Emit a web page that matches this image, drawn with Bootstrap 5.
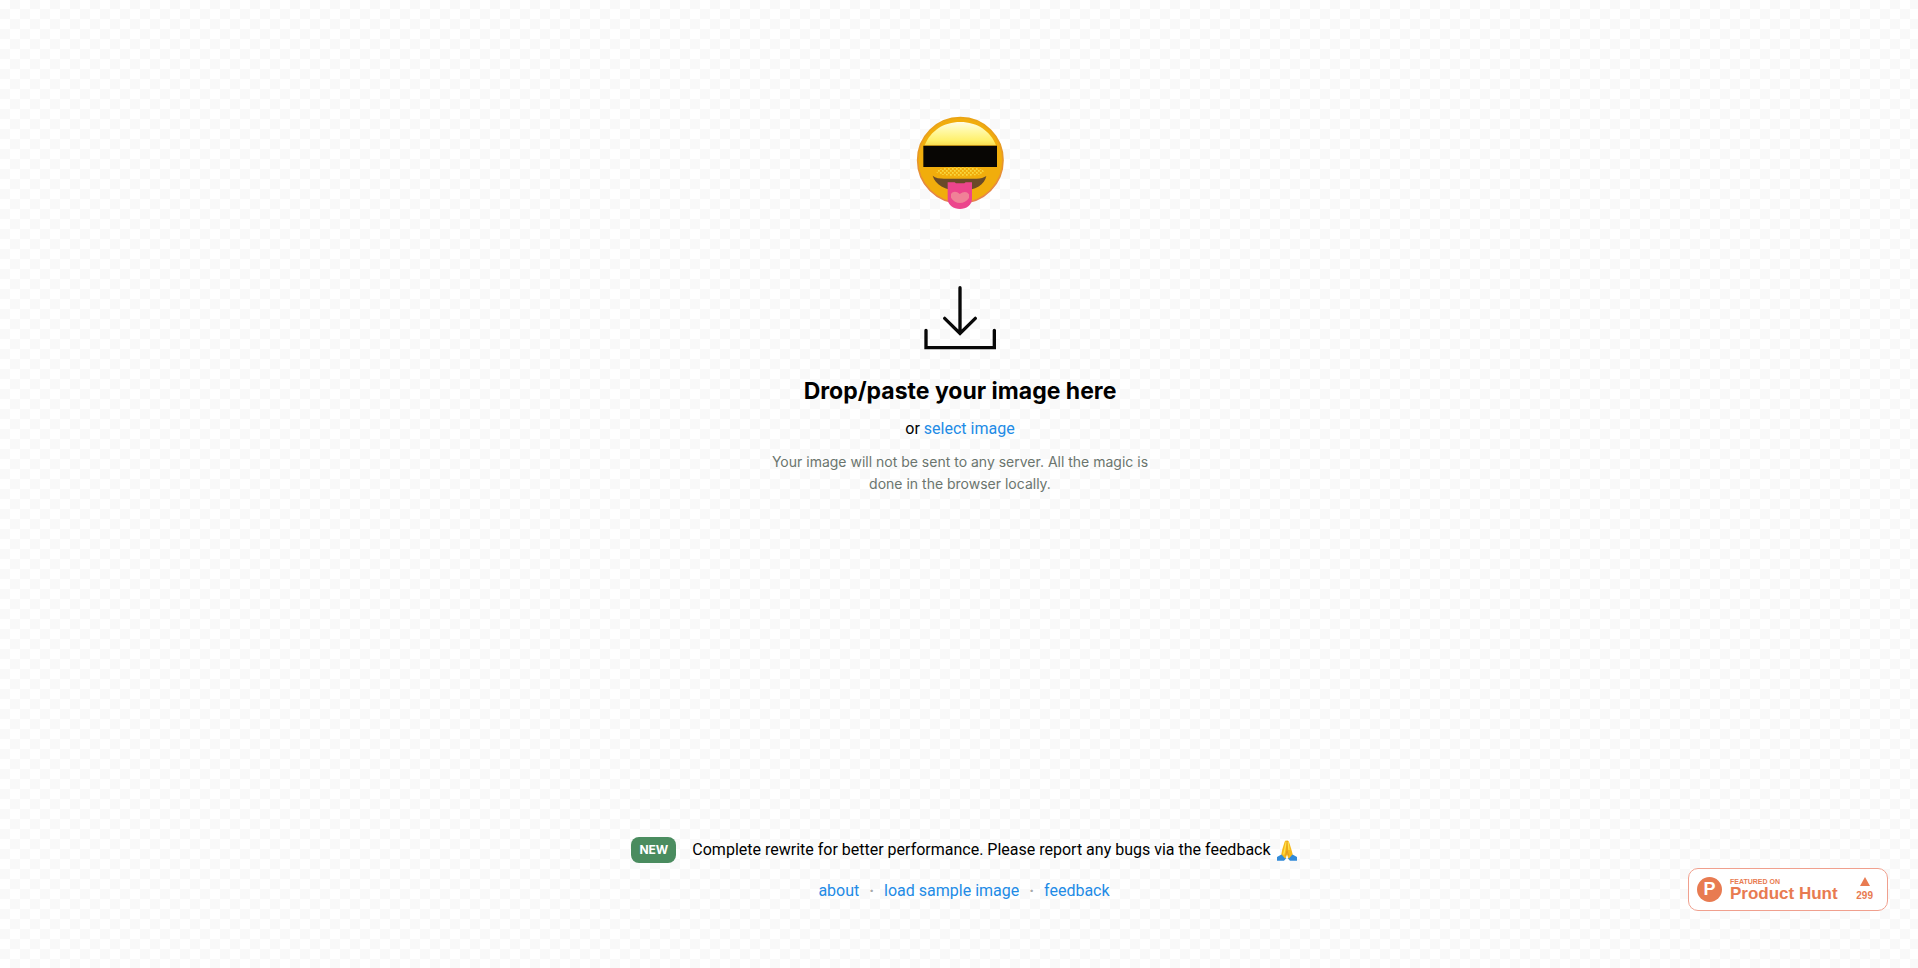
<!DOCTYPE html>
<html lang="en">
<head>
<meta charset="utf-8">
<meta name="viewport" content="width=device-width, initial-scale=1">
<title>Drop or paste your image</title>
<link href="https://cdn.jsdelivr.net/npm/bootstrap@5.3.0/dist/css/bootstrap.min.css" rel="stylesheet">
<style>
  body {
    font-family: Roboto, "Liberation Sans", sans-serif;
    font-size: 16px;
    line-height: 24px;
    color: #000;
    background: #fff repeating-conic-gradient(#fff 0 25%, #f9f9f9 0 50%) 10px -1px / 20px 20px;
  }
  a { color: #228be6; text-decoration: none; }
  a:hover { text-decoration: underline; }
  .page-main { padding: 116px 0 0 2px; }
  .face { width: 90px; height: 94px; margin-bottom: 76px; }
  .drop-icon { width: 72px; height: 64px; margin-bottom: 23px; }
  .drop-title, .privacy, .tag-new { font-family: Inter, "Liberation Sans", sans-serif; }
  .drop-title { font-size: 23px; line-height: 36px; font-weight: 700; margin-bottom: 8px; }
  .privacy { font-size: 14px; line-height: 22px; max-width: 400px; color: #6b756e; margin-top: 10px; }
  .page-footer { padding: 0 0 65px 10px; }
  .tag-new { font-size: 12px; line-height: 14px; font-weight: 700; padding: 6px 8px; border-radius: 8px; background: #4a8c5f; color: #fff; }
  .hands { width: 20px; height: 21px; }
  .notice-text { gap: 6px; }
  .site-links { gap: 10px; }
  .dot { color: #aaa; font-weight: 700; }
  .hunt { right: 30px; bottom: 57px; width: 200px; height: 43px; padding: 0 14px 0 8px; border: 1px solid #f0a08e; border-radius: 10px; background: #fff; color: #e87b51; font-family: "Liberation Sans", Arial, sans-serif; font-weight: 700; }
  .hunt:hover { text-decoration: none; }
  .hunt-logo { width: 25px; height: 25px; border-radius: 50%; background: #e87b51; color: #fff; font-size: 18px; line-height: 25px; }
  .hunt-over { font-size: 7px; line-height: 9px; }
  .hunt-name { font-size: 17px; line-height: 16px; }
  .hunt-count { font-size: 10px; line-height: 12px; }
</style>
</head>
<body class="d-flex flex-column min-vh-100">
<main class="page-main flex-grow-1 d-flex flex-column align-items-center text-center">
  <svg class="face" viewBox="45 48 270 282" role="img" aria-label="Face with censored eyes">
    <defs>
      <linearGradient id="shine" x1="0" y1="0" x2="0" y2="1">
        <stop offset="0" stop-color="#fffce6"/><stop offset=".35" stop-color="#fff9a8"/>
        <stop offset=".8" stop-color="#fff06a"/><stop offset="1" stop-color="#f9dc50"/>
      </linearGradient>
      <linearGradient id="rim" x1="0" y1="0" x2="0" y2="1">
        <stop offset="0" stop-color="#eaa414"/><stop offset=".5" stop-color="#e7972a"/><stop offset="1" stop-color="#e57f50"/>
      </linearGradient>
      <pattern id="grain" width="12" height="12" patternUnits="userSpaceOnUse">
        <path d="M0 0h5v5H0zM6 6h5v5H6z" fill="#f8d840"/>
      </pattern>
    </defs>
    <circle cx="181" cy="181" r="128" fill="#f1ad0c" stroke="url(#rim)" stroke-width="5"/>
    <path d="M74 136C91 93 130 66 181 66s90 27 107 70z" fill="url(#shine)"/>
    <ellipse cx="181" cy="215" rx="72" ry="14" fill="url(#grain)"/>
    <path d="M70 137h221v64H70z" fill="#080604"/>
    <path d="M98 227c8 7 22 9 34 9h98c12 0 22-3 29-8-5 25-30 44-78 44s-75-19-83-45z" fill="#694a28"/>
    <path d="M143 247h21l4 3h25l4-3h19v50c0 18-17 30-36 30s-37-12-37-30z" fill="#ec458c"/>
    <path d="M153 282c6-8 16-9 26 0 12-9 22-8 28 1v11c-7 10-17 15-27 15s-21-6-27-16z" fill="#f08197"/>
  </svg>

  <svg class="drop-icon" viewBox="72 48 216 192" fill="none" stroke="#080808" stroke-width="10" stroke-linecap="round" stroke-linejoin="miter" aria-hidden="true">
    <path d="M180 53v136M134 145l46 45 46-45M78 181v52h205v-52"/>
  </svg>
  <h1 class="drop-title">Drop/paste your image here</h1>
  <div>or <a href="#select">select image</a></div>
  <p class="privacy">Your image will not be sent to any server. All the magic is done in the browser locally.</p>
</main>

<footer class="page-footer text-center">
  <div class="d-flex justify-content-center align-items-center gap-3">
    <span class="tag-new">NEW</span>
    <span class="notice-text d-flex align-items-center">Complete rewrite for better performance. Please report any bugs via the feedback
      <svg class="hands" viewBox="0 0 60 63" role="img" aria-label="Folded hands">
        <path d="M0 62V51l16-9 12 13-7 7zM60 62V51l-16-9-12 13 7 7z" fill="#338bd8"/>
        <path d="M29 2c-4-2-6 2-7 6L16 28l-3 15 12 13 5-12 5 12 12-13-4-15-6-20c-1-4-4-8-8-6z" fill="#f6b91c"/>
        <path d="M28 5l-5 25-3 14M33 6l3 24" fill="none" stroke="#ffe34b" stroke-width="4"/>
        <path d="M30 3v29l-4 15M30 32l5 15" fill="none" stroke="#d68b22" stroke-width="2"/>
      </svg>
    </span>
  </div>
  <nav class="site-links d-flex justify-content-center mt-3" aria-label="Site">
    <a href="#about">about</a><span class="dot">·</span>
    <a href="#sample">load sample image</a><span class="dot">·</span>
    <a href="#feedback">feedback</a>
  </nav>
</footer>

<a class="hunt position-fixed d-flex align-items-center gap-2" href="#product-hunt">
  <span class="hunt-logo text-center">P</span>
  <span class="flex-grow-1 text-nowrap"><span class="hunt-over d-block">FEATURED ON</span><span class="hunt-name d-block">Product Hunt</span></span>
  <span class="hunt-count d-flex flex-column align-items-center gap-1">
    <svg width="10" height="9" viewBox="0 0 10 9" aria-hidden="true"><path d="M5 0l5 9H0z" fill="currentColor"/></svg>299
  </span>
</a>
<script src="https://cdn.jsdelivr.net/npm/bootstrap@5.3.0/dist/js/bootstrap.bundle.min.js"></script>
</body>
</html>
